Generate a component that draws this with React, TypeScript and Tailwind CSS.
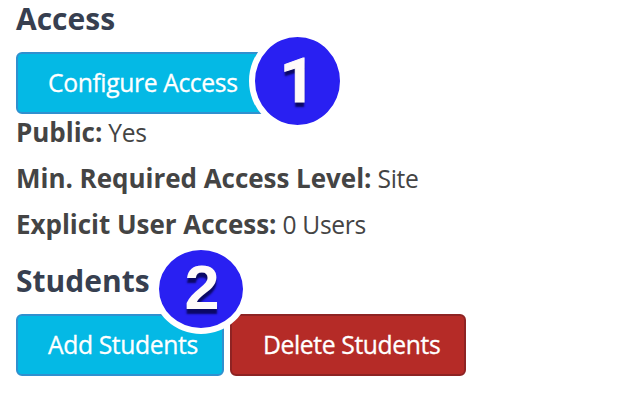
const details = [
  { label: "Public:", value: "Yes" },
  { label: "Min. Required Access Level:", value: "Site" },
  { label: "Explicit User Access:", value: "0 Users" },
];

const App = () => {
  return (
    <main className="relative h-[406px] w-[626px] overflow-hidden bg-white pl-4 font-['Open_Sans',sans-serif] text-[#444444]">
      <section>
        <h2 className="h-[52px] pt-px text-[30px] leading-9 font-bold text-[#373f50]">Access</h2>
        <button className="flex h-[62px] w-[254px] items-center rounded-md border-2 border-[#3090cf] bg-[#04b9e5] pl-[30px] text-[24.7px] tracking-[-0.38px] whitespace-nowrap text-white [-webkit-text-stroke:0.3px_white]">
          Configure Access
        </button>
        <dl className="-mt-[5px]">
          {details.map((item) => (
            <div key={item.label} className="flex h-[46px] items-baseline gap-1.5 whitespace-nowrap">
              <dt className="text-[26px] leading-[46px] font-bold tracking-[-0.03px]">{item.label}</dt>
              <dd className="text-[24.6px] leading-[46px] tracking-[-0.3px]">{item.value}</dd>
            </div>
          ))}
        </dl>
      </section>

      <section className="pt-4">
        <h2 className="h-[51px] text-[30px] leading-9 font-bold text-[#373f50]">Students</h2>
        <div className="flex gap-1.5 text-[24.7px] tracking-[-0.38px] whitespace-nowrap text-white [-webkit-text-stroke:0.3px_white]">
          <button className="flex h-[62px] w-[208px] items-center rounded-md border-2 border-[#3090cf] bg-[#04b9e5] pl-[30px]">
            Add Students
          </button>
          <button className="flex h-[62px] w-[236px] items-center rounded-md border-2 border-[#8e2323] bg-[#b52b27] pl-[31px]">
            Delete Students
          </button>
        </div>
      </section>

      {/* numbered callouts */}
      <span className="absolute top-[31px] left-[249px] flex h-[100px] w-[97px] items-center justify-center rounded-[50%] border-6 border-white bg-[#2920f2] font-['Roboto',sans-serif] text-[62px] leading-none font-bold text-[#fffafa] [-webkit-text-stroke:1px_#fffafa] [text-shadow:0_5px_2px_#0b0865]">
        1
      </span>
      <span className="absolute top-[244px] left-[153px] flex h-[90px] w-[96px] items-center justify-center rounded-[50%] border-6 border-white bg-[#2920f2] pb-1 pl-0.5 font-['Liberation_Sans',sans-serif] text-[63px] leading-none font-bold text-[#fffafa] [text-shadow:0_5px_2px_#0b0865]">
        2
      </span>
    </main>
  );
};

export default App;
